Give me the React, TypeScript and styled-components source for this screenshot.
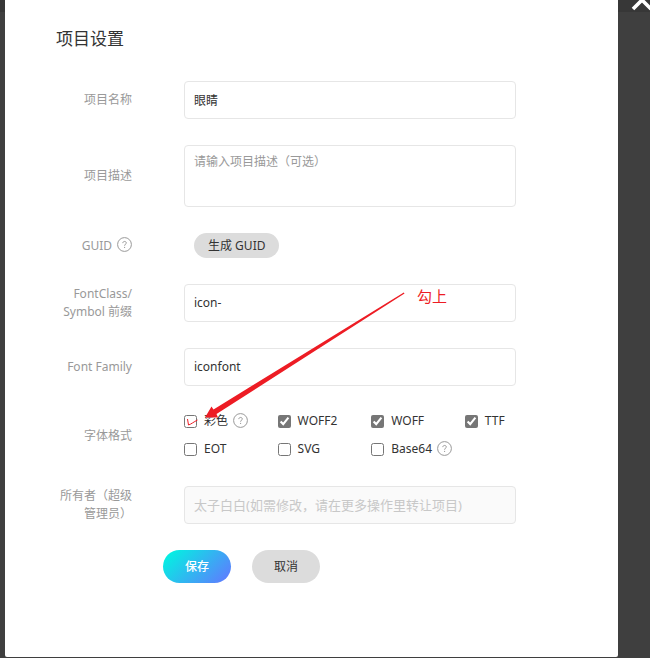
import React, { useState } from "react";
import styled, { createGlobalStyle, css } from "styled-components";

const GlobalStyle = createGlobalStyle`
  * { box-sizing: border-box; }
  body {
    margin: 0;
    background: #3f3f3f;
    font-family: "Noto Sans", "Noto Sans CJK SC", sans-serif;
    font-size: 12px;
    line-height: 18px;
    color: #333;
  }
  button, input, textarea { font: inherit; color: inherit; }
`;

const Backdrop = styled.div`
  position: relative;
  min-height: 100vh;
  padding: 0 32px 1px 5px;
  background: linear-gradient(#373737 12px, #3f3f3f 12px);
  overflow: hidden;
`;

const Dialog = styled.section`
  position: relative;
  padding: 26px 102px 74px 51px;
  background: #fff;
  border-radius: 0 0 2px 2px;
`;

const CloseButton = styled.button`
  position: absolute;
  top: -12px;
  right: -4px;
  width: 24px;
  height: 24px;
  padding: 0;
  border: 0;
  background: none;
  color: #fff;
  cursor: pointer;
  svg { display: block; }
`;

const Title = styled.h1`
  margin: 0 0 29px;
  font-size: 17px;
  line-height: 26px;
  font-weight: 400;
`;

const Form = styled.form`
  display: flex;
  flex-direction: column;
  gap: 26px;
`;

const Row = styled.div`
  display: grid;
  grid-template-columns: 76px minmax(0, 1fr);
  column-gap: 52px;
  align-items: center;
`;

const labelStyle = css`
  color: #999;
  text-align: right;
`;

const Label = styled.label`${labelStyle}`;

const LabelGroup = styled.div`
  ${labelStyle}
  display: flex;
  align-items: center;
  justify-content: flex-end;
  gap: 5px;
`;

const fieldStyle = css`
  display: block;
  width: 100%;
  padding: 0 9px;
  border: 1px solid #e6e6e6;
  border-radius: 4px;
  background: #fff;
  outline: none;
  &::placeholder { color: #999; opacity: 1; }
`;

const TextInput = styled.input`
  ${fieldStyle}
  height: 38px;
  padding-bottom: 1px;
  &:disabled {
    background: #fafafa;
    color: #c8c8c8;
    font-size: 13px;
  }
`;

const TextArea = styled.textarea`
  ${fieldStyle}
  height: 62px;
  padding-top: 7px;
  resize: none;
`;

const PillButton = styled.button<{ $kind?: "primary" | "small" }>`
  height: ${(p) => (p.$kind === "small" ? 25 : 33)}px;
  padding: 0 ${(p) => (p.$kind === "small" ? 14 : 22)}px;
  border: 0;
  border-radius: 17px;
  background: ${(p) =>
    p.$kind === "primary" ? "linear-gradient(135deg, #00f5e1 5%, #5f7bff 95%)" : "#dcdcdc"};
  color: ${(p) => (p.$kind === "primary" ? "#fff" : "#333")};
  font-weight: ${(p) => (p.$kind === "primary" ? 500 : 400)};
  cursor: pointer;
`;

const Indent = styled.div`
  display: flex;
  padding-left: 10px;
`;

const FormatGrid = styled.div`
  display: grid;
  grid-template-columns: repeat(3, 28.2%) auto;
  row-gap: 10px;
  padding-bottom: 2px;
`;

const Format = styled.div`
  display: flex;
  align-items: center;
  gap: 5px;
  white-space: nowrap;
`;

const FormatLabel = styled.label`
  position: relative;
  display: flex;
  align-items: center;
  gap: 7px;
`;

const Checkbox = styled.input`
  width: 13px;
  height: 13px;
  margin: 0;
  accent-color: #767676;
`;

const HelpButton = styled.button`
  padding: 0 0 2px;
  border: 0;
  background: none;
  color: #999;
  cursor: help;
  svg { display: block; }
`;

const Actions = styled.div`
  display: flex;
  gap: 21px;
  padding-left: 107px;
`;

const Annotation = styled.div`
  position: absolute;
  top: 288px;
  left: 200px;
  pointer-events: none;
  svg { display: block; overflow: visible; }
`;

const AnnotationText = styled.span`
  position: absolute;
  top: -2px;
  left: 212px;
  color: #ed1c24;
  font-size: 15px;
  line-height: 20px;
  white-space: nowrap;
`;

const HandTick = styled.svg`
  position: absolute;
  top: 2px;
  left: 2px;
  overflow: visible;
  pointer-events: none;
`;

function Help({ about }: { about: string }) {
  return (
    <HelpButton type="button" aria-label={about}>
      <svg width="15" height="15" viewBox="0 0 15 15" fill="none" stroke="currentColor">
        <circle cx="7.5" cy="7.5" r="6.9" />
        <path d="M5.8 6.1c0-2.2 3.5-2.2 3.5-.1 0 1.2-1.7 1.3-1.7 2.7M7.6 9.9v1.1" />
      </svg>
    </HelpButton>
  );
}

const formats = [
  { name: "彩色", on: false, help: true, tick: true },
  { name: "WOFF2", on: true },
  { name: "WOFF", on: true },
  { name: "TTF", on: true },
  { name: "EOT", on: false },
  { name: "SVG", on: false },
  { name: "Base64", on: false, help: true },
];

export default function App() {
  const [checked, setChecked] = useState(formats.map((f) => f.on));
  const toggle = (index: number) =>
    setChecked((all) => all.map((value, i) => (i === index ? !value : value)));

  return (
    <>
      <GlobalStyle />
      <Backdrop>
        <CloseButton type="button" aria-label="关闭">
          <svg width="24" height="24" viewBox="0 0 24 24" stroke="currentColor" strokeWidth="3.600">
            <path d="M3 3l18 18M21 3L3 21" />
          </svg>
        </CloseButton>
        <Dialog role="dialog" aria-labelledby="title">
          <Title id="title">项目设置</Title>
          <Form onSubmit={(e) => e.preventDefault()}>
            <Row>
              <Label htmlFor="name">项目名称</Label>
              <TextInput id="name" defaultValue="眼睛" />
            </Row>
            <Row>
              <Label htmlFor="desc">项目描述</Label>
              <TextArea id="desc" placeholder="请输入项目描述（可选）" />
            </Row>
            <Row>
              <LabelGroup>
                GUID
                <Help about="GUID" />
              </LabelGroup>
              <Indent>
                <PillButton type="button" $kind="small">生成 GUID</PillButton>
              </Indent>
            </Row>
            <Row>
              <Label htmlFor="prefix">FontClass/ Symbol 前缀</Label>
              <TextInput id="prefix" defaultValue="icon-" />
            </Row>
            <Row>
              <Label htmlFor="family">Font Family</Label>
              <TextInput id="family" defaultValue="iconfont" />
            </Row>
            <Row role="group" aria-labelledby="formats">
              <LabelGroup id="formats">字体格式</LabelGroup>
              <FormatGrid>
                {formats.map((f, i) => (
                  <Format key={f.name}>
                    <FormatLabel>
                      <Checkbox type="checkbox" checked={checked[i]} onChange={() => toggle(i)} />
                      {f.name}
                      {f.tick && (
                        <HandTick width="13" height="13" fill="none" stroke="#ed1c24">
                          <path d="M1.500 5c.5 2 .5 4 1 6 3-1 5-3 9-5" />
                        </HandTick>
                      )}
                    </FormatLabel>
                    {f.help && <Help about={f.name} />}
                  </Format>
                ))}
              </FormatGrid>
            </Row>
            <Row>
              <Label htmlFor="owner">所有者（超级管理员）</Label>
              <TextInput id="owner" disabled defaultValue="太子白白(如需修改，请在更多操作里转让项目)" />
            </Row>
            <Actions>
              <PillButton type="submit" $kind="primary">保存</PillButton>
              <PillButton type="button">取消</PillButton>
            </Actions>
          </Form>
          <Annotation>
            <svg width="200" height="130" fill="#ed1c24">
              <path d="M199.500 5.500L11.500 126 13 129.500 0 129.500 6.500 118.500 8.500 121.500 198.800 4.400z" />
            </svg>
            <AnnotationText>勾上</AnnotationText>
          </Annotation>
        </Dialog>
      </Backdrop>
    </>
  );
}
